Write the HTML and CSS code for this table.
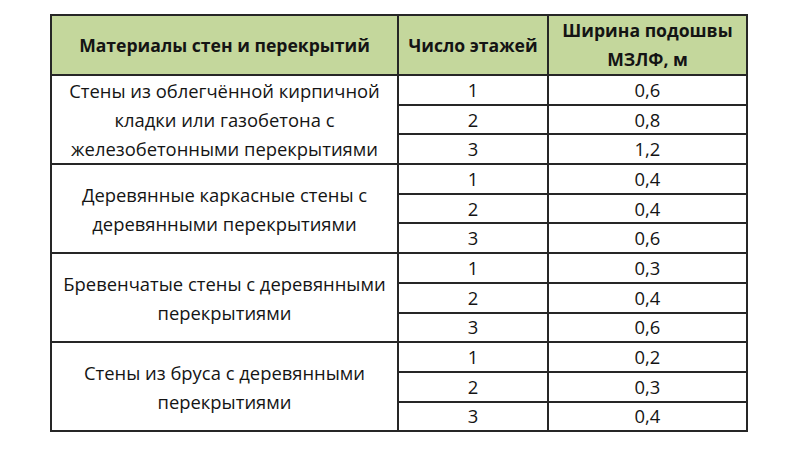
FILE: index.html
```html
<!DOCTYPE html>
<html lang="ru">
<head>
<meta charset="utf-8">
<link rel="stylesheet" href="styles.css">
</head>
<body>
<table class="tbl">
  <colgroup>
    <col class="c1"><col class="c2"><col class="c3">
  </colgroup>
  <thead>
    <tr class="head">
      <th>Материалы стен и перекрытий</th>
      <th>Число этажей</th>
      <th>Ширина подошвы<br>МЗЛФ, м</th>
    </tr>
  </thead>
  <tbody>
    <tr><td rowspan="3" class="mat">Стены из облегчённой кирпичной<br>кладки или газобетона с<br>железобетонными перекрытиями</td><td>1</td><td>0,6</td></tr>
    <tr><td>2</td><td>0,8</td></tr>
    <tr><td>3</td><td>1,2</td></tr>
    <tr><td rowspan="3" class="mat">Деревянные каркасные стены с<br>деревянными перекрытиями</td><td>1</td><td>0,4</td></tr>
    <tr><td>2</td><td>0,4</td></tr>
    <tr><td>3</td><td>0,6</td></tr>
    <tr><td rowspan="3" class="mat">Бревенчатые стены с деревянными<br>перекрытиями</td><td>1</td><td>0,3</td></tr>
    <tr><td>2</td><td>0,4</td></tr>
    <tr><td>3</td><td>0,6</td></tr>
    <tr><td rowspan="3" class="mat">Стены из бруса с деревянными<br>перекрытиями</td><td>1</td><td>0,2</td></tr>
    <tr><td>2</td><td>0,3</td></tr>
    <tr><td>3</td><td>0,4</td></tr>
  </tbody>
</table>
</body>
</html>
```
FILE: styles.css
```css
html, body {
  margin: 0;
  padding: 0;
  background: #ffffff;
}
body {
  padding: 14px 0 0 50px;
  font-family: "Open Sans", "Noto Sans", sans-serif;
  color: #141414;
}
.tbl {
  border-collapse: collapse;
  table-layout: fixed;
  width: 696px;
  font-size: 18.4px;
}
.c1 { width: 347px; }
.c2 { width: 150px; }
.c3 { width: 199px; }
.tbl th, .tbl td {
  border: 2px solid #262626;
  padding: 0;
  text-align: center;
  vertical-align: middle;
}
.head {
  height: 59px;
  background: #c4d79c;
}
.head th {
  font-weight: bold;
  font-size: 17.6px;
  line-height: 29px;
}
.tbl td {
  height: 27.7px;
  line-height: 26px;
}
.tbl td.mat {
  line-height: 29px;
}
```
